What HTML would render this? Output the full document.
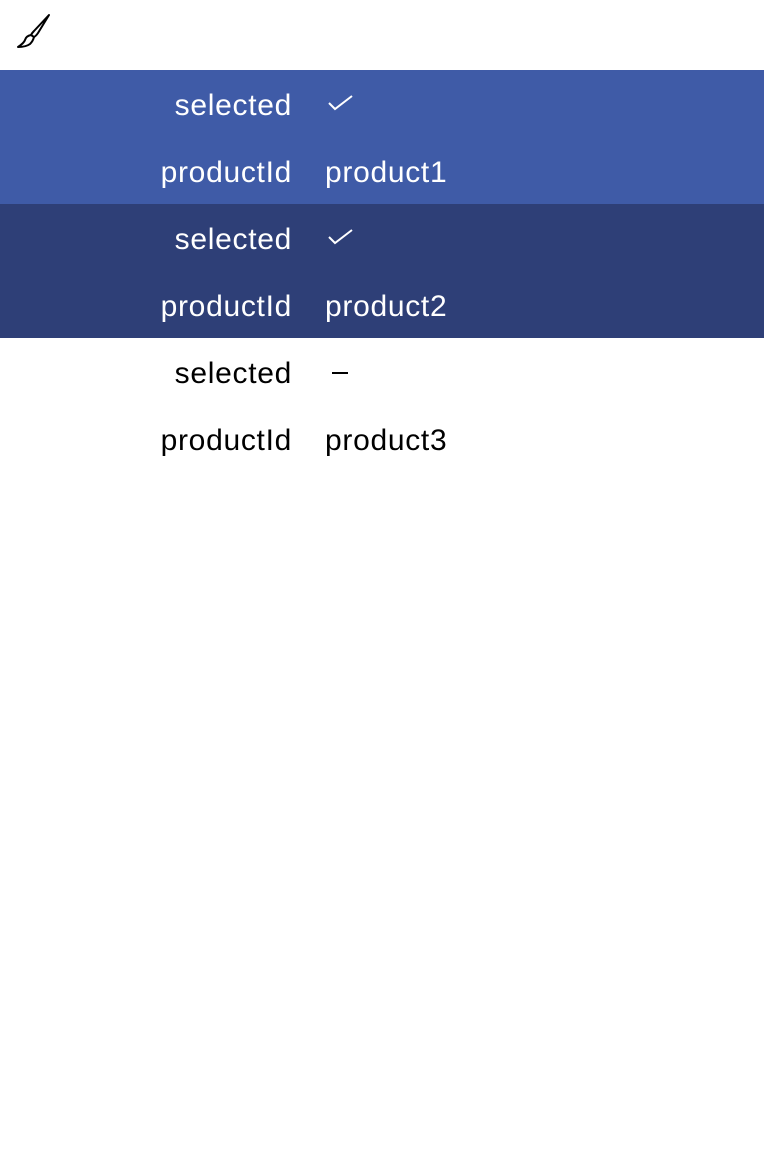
<!DOCTYPE html>
<html><head><style>
body{margin:0;width:764px;height:1152px;background:#fff;font-family:"Liberation Sans",sans-serif;overflow:hidden}
.band{height:134px;position:relative}
.row{height:67px;position:relative}
.k{position:absolute;right:472px;top:2px;line-height:67px;font-size:30px;letter-spacing:0.7px;white-space:nowrap}
.v{position:absolute;left:325px;top:2px;line-height:67px;font-size:30px;letter-spacing:0.7px;white-space:nowrap}
.b1{background:#3f5ba7;color:#fff}
.b2{background:#2e3f77;color:#fff}
.b3{color:#000}
svg.ck{position:absolute;left:328px;top:25px}
</style></head><body>
<div style="height:70px;position:relative">
<svg width="40" height="40" viewBox="0 0 40 40" style="position:absolute;left:14px;top:12px">
<path d="M35 3 L24 21 Q22 24 20 25 L17 23 Q18 21 20 19 Z" fill="none" stroke="#000" stroke-width="2" stroke-linejoin="round"/>
<path d="M17 23 Q12 24 11 28 Q10 31 4 35 Q12 35 16 32 Q19 29 20 25" fill="none" stroke="#000" stroke-width="2" stroke-linejoin="round"/>
</svg>
</div>
<div class="band b1">
<div class="row"><span class="k">selected</span><svg class="ck" width="26" height="16" viewBox="0 0 26 16"><path d="M1 8 L7 14 L24 1" fill="none" stroke="#fff" stroke-width="2"/></svg></div>
<div class="row"><span class="k">productId</span><span class="v">product1</span></div>
</div>
<div class="band b2">
<div class="row"><span class="k">selected</span><svg class="ck" width="26" height="16" viewBox="0 0 26 16"><path d="M1 8 L7 14 L24 1" fill="none" stroke="#fff" stroke-width="2"/></svg></div>
<div class="row"><span class="k">productId</span><span class="v">product2</span></div>
</div>
<div class="band b3">
<div class="row"><span class="k">selected</span><div style="position:absolute;left:332px;top:34px;width:16px;height:2px;background:#000"></div></div>
<div class="row"><span class="k">productId</span><span class="v">product3</span></div>
</div>
</body></html>
